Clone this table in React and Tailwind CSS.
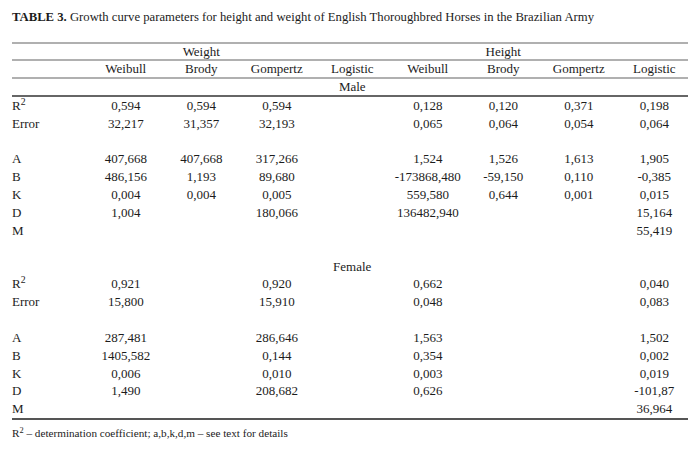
import React from "react";

const COLS = "grid grid-cols-[76px_repeat(8,75.5px)]";

function Cell({ children }) {
  return (
    <div className="flex justify-center whitespace-nowrap">
      <span>{children}</span>
    </div>
  );
}

function Row({ label, vals = [] }) {
  const cells = [];
  for (let i = 0; i < 8; i++) cells.push(<Cell key={i}>{vals[i] || ""}</Cell>);
  return (
    <div className={`${COLS} h-[17.85px] items-center`}>
      <div className="whitespace-nowrap">{label}</div>
      {cells}
    </div>
  );
}

function Sex({ label }) {
  return (
    <div className={`${COLS} h-[17.85px] items-center`}>
      <div className="col-start-5 flex justify-center">{label}</div>
    </div>
  );
}

const R2 = (
  <span>
    R<sup>2</sup>
  </span>
);

export default function App() {
  return (
    <div className="w-[700px] h-[452px] bg-white text-[#1c1c1c] font-['Liberation_Serif',serif] text-[13px] pt-[8px] px-[12px]">
      <div className="leading-[18px] whitespace-nowrap text-[12.7px]">
        <span className="font-bold">TABLE 3.</span> Growth curve parameters for height and weight of English Thoroughbred Horses in the Brazilian Army
      </div>
      <div className="mt-[16px] w-[676px] border-t-2 border-[#b0b0b0] leading-[16px]">
        <div className={`${COLS} h-[17px] items-center border-b-2 border-[#b0b0b0]`}>
          <div className="col-start-2 col-span-3 flex justify-center">Weight</div>
          <div className="col-start-6 col-span-3 flex justify-center">Height</div>
        </div>
        <div className={`${COLS} h-[18px] items-center border-b-2 border-[#b0b0b0]`}>
          <div></div>
          <Cell>Weibull</Cell>
          <Cell>Brody</Cell>
          <Cell>Gompertz</Cell>
          <Cell>Logistic</Cell>
          <Cell>Weibull</Cell>
          <Cell>Brody</Cell>
          <Cell>Gompertz</Cell>
          <Cell>Logistic</Cell>
        </div>
        <div className={`${COLS} h-[18px] items-center border-b-2 border-[#666]`}>
          <div className="col-start-5 flex justify-center">Male</div>
        </div>
        <div className="border-b-2 border-[#555]">
          <Row label={R2} vals={["0,594", "0,594", "0,594", "", "0,128", "0,120", "0,371", "0,198"]} />
          <Row label="Error" vals={["32,217", "31,357", "32,193", "", "0,065", "0,064", "0,054", "0,064"]} />
          <Row label="" />
          <Row label="A" vals={["407,668", "407,668", "317,266", "", "1,524", "1,526", "1,613", "1,905"]} />
          <Row label="B" vals={["486,156", "1,193", "89,680", "", "-173868,480", "-59,150", "0,110", "-0,385"]} />
          <Row label="K" vals={["0,004", "0,004", "0,005", "", "559,580", "0,644", "0,001", "0,015"]} />
          <Row label="D" vals={["1,004", "", "180,066", "", "136482,940", "", "", "15,164"]} />
          <Row label="M" vals={["", "", "", "", "", "", "", "55,419"]} />
          <Row label="" />
          <Sex label="Female" />
          <Row label={R2} vals={["0,921", "", "0,920", "", "0,662", "", "", "0,040"]} />
          <Row label="Error" vals={["15,800", "", "15,910", "", "0,048", "", "", "0,083"]} />
          <Row label="" />
          <Row label="A" vals={["287,481", "", "286,646", "", "1,563", "", "", "1,502"]} />
          <Row label="B" vals={["1405,582", "", "0,144", "", "0,354", "", "", "0,002"]} />
          <Row label="K" vals={["0,006", "", "0,010", "", "0,003", "", "", "0,019"]} />
          <Row label="D" vals={["1,490", "", "208,682", "", "0,626", "", "", "-101,87"]} />
          <Row label="M" vals={["", "", "", "", "", "", "", "36,964"]} />
        </div>
      </div>
      <div className="mt-[6px] text-[11.2px] leading-[14px] whitespace-nowrap">
        R<sup>2</sup> – determination coefficient; a,b,k,d,m – see text for details
      </div>
    </div>
  );
}
